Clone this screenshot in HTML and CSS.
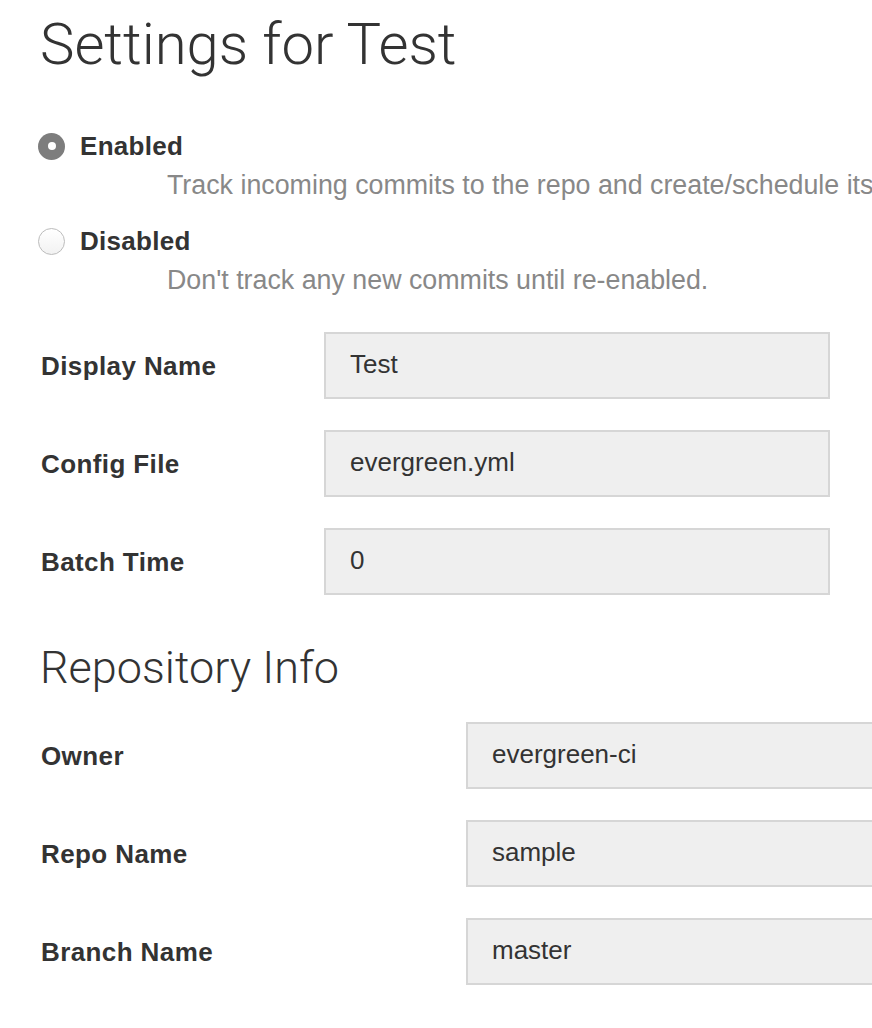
FILE: index.html
```html
<!DOCTYPE html>
<html>
<head>
<meta charset="utf-8">
<link rel="stylesheet" href="styles.css">
</head>
<body>
<div class="page">
  <h1 class="title">Settings for Test</h1>

  <div class="radios">
    <div class="radio-item">
      <div class="radio-row">
        <span class="radio checked"></span>
        <span class="radio-label">Enabled</span>
      </div>
      <div class="radio-desc">Track incoming commits to the repo and create/schedule its</div>
    </div>
    <div class="radio-item">
      <div class="radio-row">
        <span class="radio"></span>
        <span class="radio-label">Disabled</span>
      </div>
      <div class="radio-desc">Don't track any new commits until re-enabled.</div>
    </div>
  </div>

  <div class="form form-main">
    <div class="field-label">Display Name</div>
    <div class="field-input">Test</div>
    <div class="field-label">Config File</div>
    <div class="field-input">evergreen.yml</div>
    <div class="field-label">Batch Time</div>
    <div class="field-input">0</div>
  </div>

  <h2 class="section-title">Repository Info</h2>

  <div class="form form-repo">
    <div class="field-label">Owner</div>
    <div class="field-input">evergreen-ci</div>
    <div class="field-label">Repo Name</div>
    <div class="field-input">sample</div>
    <div class="field-label">Branch Name</div>
    <div class="field-input">master</div>
  </div>
</div>
</body>
</html>
```

FILE: styles.css
```css
html, body {
  margin: 0;
  padding: 0;
  background: #fff;
  overflow: hidden;
}

body {
  font-family: "Liberation Sans", Arial, sans-serif;
  color: #333;
}

.page {
  padding: 0 0 0 41px;
  width: 1200px;
}

.title {
  font-family: Roboto, "Liberation Sans", sans-serif;
  font-weight: 300;
  font-size: 58px;
  line-height: 68px;
  margin: 10px 0 0 -1px;
  color: #333;
}

.radios {
  margin-top: 53px;
}

.radio-item + .radio-item {
  margin-top: 26px;
}

.radio-row {
  display: flex;
  align-items: center;
  height: 30px;
  margin-left: -3px;
}

.radio {
  width: 27px;
  height: 27px;
  border-radius: 50%;
  border: 1px solid #bcbcbc;
  background: linear-gradient(#fff, #f2f2f2);
  box-sizing: border-box;
  position: relative;
  margin-right: 15px;
  flex: none;
}

.radio.checked {
  border: none;
  background: #7d7d7d;
}

.radio.checked::after {
  content: "";
  position: absolute;
  left: 50%;
  top: 50%;
  width: 8px;
  height: 8px;
  margin: -4px 0 0 -4px;
  border-radius: 50%;
  background: #fff;
}

.radio-label {
  font-weight: bold;
  font-size: 26px;
  letter-spacing: 0.3px;
  color: #333;
}

.radio-desc {
  margin-left: 126px;
  margin-top: 9px;
  font-size: 26.8px;
  line-height: 30px;
  color: #888;
  white-space: nowrap;
}

.form {
  display: grid;
  row-gap: 31px;
  align-items: center;
}

.form-main {
  margin-top: 37px;
  grid-template-columns: 283px 506px;
}

.form-repo {
  margin-top: 27px;
  grid-template-columns: 425px 506px;
}

.field-label {
  font-weight: bold;
  font-size: 26px;
  letter-spacing: 0.4px;
  color: #333;
  padding-top: 2px;
}

.field-input {
  height: 67px;
  box-sizing: border-box;
  border: 2px solid #d6d6d6;
  background: #efefef;
  padding: 0 24px;
  display: flex;
  align-items: center;
  font-size: 26px;
  color: #333;
  padding-bottom: 2px;
}

.section-title {
  font-family: Roboto, "Liberation Sans", sans-serif;
  font-weight: 300;
  font-size: 45px;
  line-height: 54px;
  margin: 46px 0 0 -1px;
  color: #333;
}
```
